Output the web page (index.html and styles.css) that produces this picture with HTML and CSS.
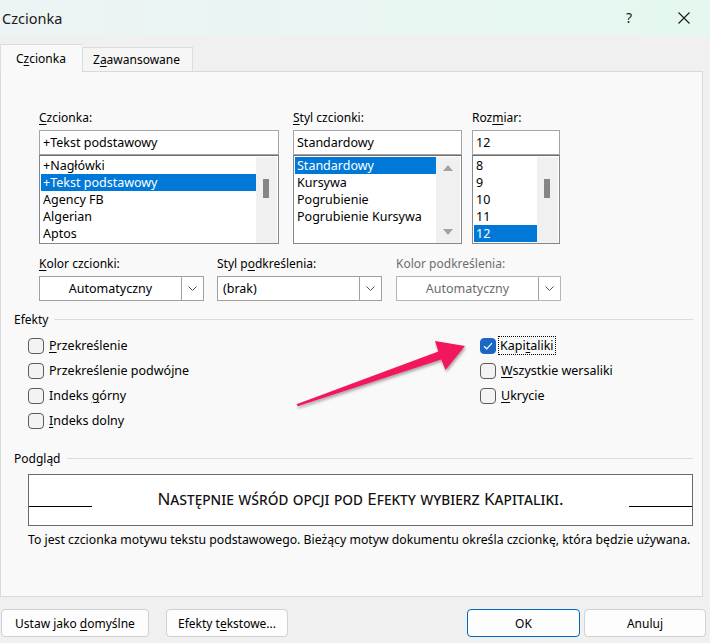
FILE: index.html
```html
<!DOCTYPE html>
<html lang="pl">
<head>
<meta charset="utf-8">
<title>Czcionka</title>
<link rel="stylesheet" href="styles.css">
</head>
<body>
<div class="dialog">
  <div class="titlebar">
    <span class="title">Czcionka</span>
    <span class="help">?</span>
    <span class="close"><svg width="12" height="12" viewBox="0 0 12 12"><path d="M0.5 0.5L11.5 11.5M11.5 0.5L0.5 11.5" stroke="#1a1a1a" stroke-width="1.1" fill="none"/></svg></span>
  </div>

  <div class="tabs">
    <div class="tab active"><span>C<u>z</u>cionka</span></div>
    <div class="tab"><span>Z<u>a</u>awansowane</span></div>
  </div>

  <div class="panel">
    <div class="fontrow">
      <div class="col col-font">
        <div class="lbl"><u>C</u>zcionka:</div>
        <div class="input">+Tekst podstawowy</div>
        <div class="list">
          <div class="items">
            <div class="item">+Nagłówki</div>
            <div class="item sel">+Tekst podstawowy</div>
            <div class="item">Agency FB</div>
            <div class="item">Algerian</div>
            <div class="item">Aptos</div>
          </div>
          <div class="scroll"><div class="thumb"></div></div>
        </div>
      </div>
      <div class="col col-style">
        <div class="lbl"><u>S</u>tyl czcionki:</div>
        <div class="input">Standardowy</div>
        <div class="list">
          <div class="items">
            <div class="item sel">Standardowy</div>
            <div class="item">Kursywa</div>
            <div class="item">Pogrubienie</div>
            <div class="item">Pogrubienie Kursywa</div>
          </div>
          <div class="scroll arrows">
            <svg width="10" height="6" viewBox="0 0 10 6"><path d="M5 0L10 6H0Z" fill="#a3a3a3"/></svg>
            <svg width="10" height="6" viewBox="0 0 10 6"><path d="M0 0H10L5 6Z" fill="#a3a3a3"/></svg>
          </div>
        </div>
      </div>
      <div class="col col-size">
        <div class="lbl">Roz<u>m</u>iar:</div>
        <div class="input">12</div>
        <div class="list">
          <div class="items">
            <div class="item">8</div>
            <div class="item">9</div>
            <div class="item">10</div>
            <div class="item">11</div>
            <div class="item sel">12</div>
          </div>
          <div class="scroll"><div class="thumb"></div></div>
        </div>
      </div>
    </div>

    <div class="comborow">
      <div class="ccol">
        <div class="lbl"><u>K</u>olor czcionki:</div>
        <div class="combo">
          <div class="combo-text center">Automatyczny</div>
          <div class="combo-btn"><svg width="9" height="5" viewBox="0 0 9 5"><path d="M0.5 0.5L4.5 4.5L8.5 0.5" stroke="#555" fill="none"/></svg></div>
        </div>
      </div>
      <div class="ccol">
        <div class="lbl">Styl p<u>o</u>dkreślenia:</div>
        <div class="combo">
          <div class="combo-text">(brak)</div>
          <div class="combo-btn"><svg width="9" height="5" viewBox="0 0 9 5"><path d="M0.5 0.5L4.5 4.5L8.5 0.5" stroke="#555" fill="none"/></svg></div>
        </div>
      </div>
      <div class="ccol disabled">
        <div class="lbl">Kolor podkreślenia:</div>
        <div class="combo">
          <div class="combo-text center">Automatyczny</div>
          <div class="combo-btn"><svg width="9" height="5" viewBox="0 0 9 5"><path d="M0.5 0.5L4.5 4.5L8.5 0.5" stroke="#555" fill="none"/></svg></div>
        </div>
      </div>
    </div>

    <div class="group">
      <span class="group-title">Efekty</span>
      <span class="group-line"></span>
    </div>
    <div class="effects">
      <div class="fxcol">
        <div class="cb"><span class="box"></span><span><u>P</u>rzekreślenie</span></div>
        <div class="cb"><span class="box"></span><span>Przekreślenie podwójne</span></div>
        <div class="cb"><span class="box"></span><span>Indeks <u>g</u>órny</span></div>
        <div class="cb"><span class="box"></span><span><u>I</u>ndeks dolny</span></div>
      </div>
      <div class="fxcol">
        <div class="cb"><span class="box checked"><svg width="10" height="8" viewBox="0 0 10 8"><path d="M1 4.2L3.7 6.8L9 1.2" stroke="#fff" stroke-width="1.2" fill="none"/></svg></span><span class="focus">Kapi<u>t</u>aliki</span></div>
        <div class="cb"><span class="box"></span><span><u>W</u>szystkie wersaliki</span></div>
        <div class="cb"><span class="box"></span><span><u>U</u>krycie</span></div>
      </div>
    </div>

    <div class="group group-preview">
      <span class="group-title">Podgląd</span>
      <span class="group-line"></span>
    </div>
    <div class="preview">
      <span class="pv-line"></span>
      <span class="pv-text">Następnie wśród opcji pod Efekty wybierz Kapitaliki.</span>
      <span class="pv-line"></span>
    </div>
    <div class="desc">To jest czcionka motywu tekstu podstawowego. Bieżący motyw dokumentu określa czcionkę, która będzie używana.</div>
  </div>

  <div class="footer">
    <div class="btns">
      <div class="btn btn-default"><span>Ustaw jako <u>d</u>omyślne</span></div>
      <div class="btn btn-effects"><span>Efekty t<u>e</u>kstowe...</span></div>
    </div>
    <div class="btns right">
      <div class="btn btn-ok primary">OK</div>
      <div class="btn btn-cancel">Anuluj</div>
    </div>
  </div>

  <svg class="arrow" width="190" height="90" viewBox="285 330 190 90">
    <defs>
      <filter id="sh" x="-10%" y="-30%" width="130%" height="170%">
        <feDropShadow dx="1" dy="2" stdDeviation="1.6" flood-color="#000" flood-opacity="0.35"/>
      </filter>
    </defs>
    <path d="M296.5 404.2 L438.3 351.6 L435 341 L465 346 L445.5 370 L441.2 359.6 L297.8 406.2 Z" fill="#f2185c" filter="url(#sh)"/>
  </svg>
</div>
</body>
</html>
```

FILE: styles.css
```css
* { box-sizing: border-box; }
html, body { margin: 0; padding: 0; }
body {
  width: 710px;
  height: 643px;
  overflow: hidden;
  background: #f0f0f0;
  font-family: "Noto Sans", "Open Sans", sans-serif;
  font-size: 12px;
  color: #000;
}
u { text-decoration: underline; text-underline-offset: 2px; text-decoration-thickness: 1px; }

.dialog { position: relative; width: 710px; height: 643px; }

.titlebar {
  height: 35px;
  display: flex;
  align-items: center;
  background: linear-gradient(90deg, #ecf3f4 0%, #e8f6f2 60%, #e4f8ef 100%);
}
.title { font-size: 14.5px; margin-left: 2px; flex: 1; color: #1a1a1a; }
.help { font-size: 14px; width: 20px; margin-right: 32px; color: #1a1a1a; }
.close { width: 12px; height: 12px; margin-right: 20px; display: flex; }

.tabs {
  height: 36px;
  display: flex;
  align-items: flex-end;
  position: relative;
  z-index: 1;
}
.tab {
  height: 24px;
  padding: 0 0 0 10px;
  width: 111px;
  border: 1px solid #dcdcdc;
  border-bottom: none;
  background: #f5f5f5;
  display: flex;
  align-items: center;
  font-size: 12px;
}
.tab.active {
  width: 82px;
  height: 28px;
  margin-bottom: -1px;
  background: #f9f9f9;
  padding-left: 15px;
  border-right: none;
}

.panel {
  width: 703px;
  height: 526px;
  background: #f9f9f9;
  border: 1px solid #d9d9d9;
  display: flex;
  flex-direction: column;
}

.fontrow { display: flex; padding-top: 38px; }
.col { display: flex; flex-direction: column; }
.col-font { width: 240px; margin-left: 38px; }
.col-style { width: 169px; margin-left: 14px; }
.col-size { width: 88px; margin-left: 10px; }

.lbl { height: 16px; line-height: 16px; margin-bottom: 4px; font-size: 12px; white-space: nowrap; }

.input {
  height: 25px;
  border: 1px solid #a5a5a5;
  background: #fff;
  padding-left: 3px;
  display: flex;
  align-items: center;
  font-size: 12.5px;
}
.list {
  height: 89px;
  border: 1px solid #828790;
  border-top-color: #6e6e6e;
  background: #fff;
  padding: 1px 1px 0 1px;
  display: flex;
}
.items { flex: 1; overflow: hidden; }
.item {
  height: 17px;
  line-height: 17px;
  padding-left: 2px;
  font-size: 12.5px;
  white-space: nowrap;
}
.item.sel { background: #0078d7; color: #fff; }
.scroll { width: 21px; background: #f0f0f0; display: flex; flex-direction: column; }
.col-style .scroll { width: 24px; }
.thumb { width: 6px; height: 19px; background: #858585; margin: 22px 0 0 7px; }
.scroll.arrows { align-items: center; justify-content: space-between; padding: 8px 0 8px; }

.comborow { display: flex; padding-top: 12px; }
.ccol { width: 165px; display: flex; flex-direction: column; }
.ccol:first-child { margin-left: 38px; }
.ccol + .ccol { margin-left: 13px; }
.ccol.disabled { margin-left: 14px; }
.ccol.disabled .lbl { color: #6d6d6d; }
.combo {
  height: 25px;
  border: 1px solid #a0a0a0;
  background: #fff;
  display: flex;
}
.combo-text { flex: 1; display: flex; align-items: center; padding-left: 5px; font-size: 12.5px; }
.combo-text.center { justify-content: center; padding-left: 0; }
.combo-btn { width: 22px; border-left: 1px solid #a0a0a0; display: flex; align-items: center; justify-content: center; }
.ccol.disabled .combo { border-color: #b5b5b5; }
.ccol.disabled .combo-text { color: #6d6d6d; }

.group { display: flex; align-items: center; height: 16px; margin-top: 11px; padding-left: 13px; }
.group-title { font-size: 12px; line-height: 16px; }
.group-line { flex: 1; height: 1px; background: #dcdcdc; margin: 0 9px 1px 6px; }
.group-preview { margin-top: 18px; }

.effects { display: flex; padding-top: 5px; padding-left: 27px; }
.fxcol { display: flex; flex-direction: column; }
.fxcol:first-child { width: 452px; }
.cb { height: 25px; display: flex; align-items: center; font-size: 12.5px; white-space: nowrap; }
.box {
  width: 16px;
  height: 16px;
  border: 1px solid #5c5c5c;
  border-radius: 4px;
  background: #f3f3f3;
  margin-right: 5px;
  display: flex;
  align-items: center;
  justify-content: center;
}
.box.checked { background: #1b67c4; border-color: #1b67c4; }
.focus { outline: 1px dotted #000; outline-offset: 0; padding: 0 1px; margin-left: -2px; }

.preview {
  margin: 7px 0 0 27px;
  width: 665px;
  height: 52px;
  border: 1px solid #6a6a6a;
  background: #fff;
  display: flex;
  align-items: flex-end;
  justify-content: space-between;
}
.pv-line { width: 63px; height: 1px; background: #000; margin-bottom: 18px; }
.pv-text {
  font-variant: small-caps;
  font-size: 17px;
  line-height: 20px;
  margin-bottom: 16px;
  color: #111;
}
.desc { margin: 6px 0 0 27px; font-size: 12.25px; line-height: 16px; white-space: nowrap; }

.footer {
  display: flex;
  justify-content: space-between;
  padding: 12px 4px 0 1px;
}
.btns { display: flex; gap: 17px; }
.btns.right { gap: 4px; }
.btn {
  height: 28px;
  border: 1px solid #d0d0d0;
  border-radius: 4px;
  background: #fdfdfd;
  display: flex;
  align-items: center;
  justify-content: center;
  font-size: 12px;
}
.btn-default { width: 148px; }
.btn-effects { width: 122px; }
.btn-ok { width: 113px; }
.btn-cancel { width: 122px; }
.btn.primary { border-color: #0067c0; }

.arrow { position: absolute; left: 285px; top: 330px; pointer-events: none; }
```
